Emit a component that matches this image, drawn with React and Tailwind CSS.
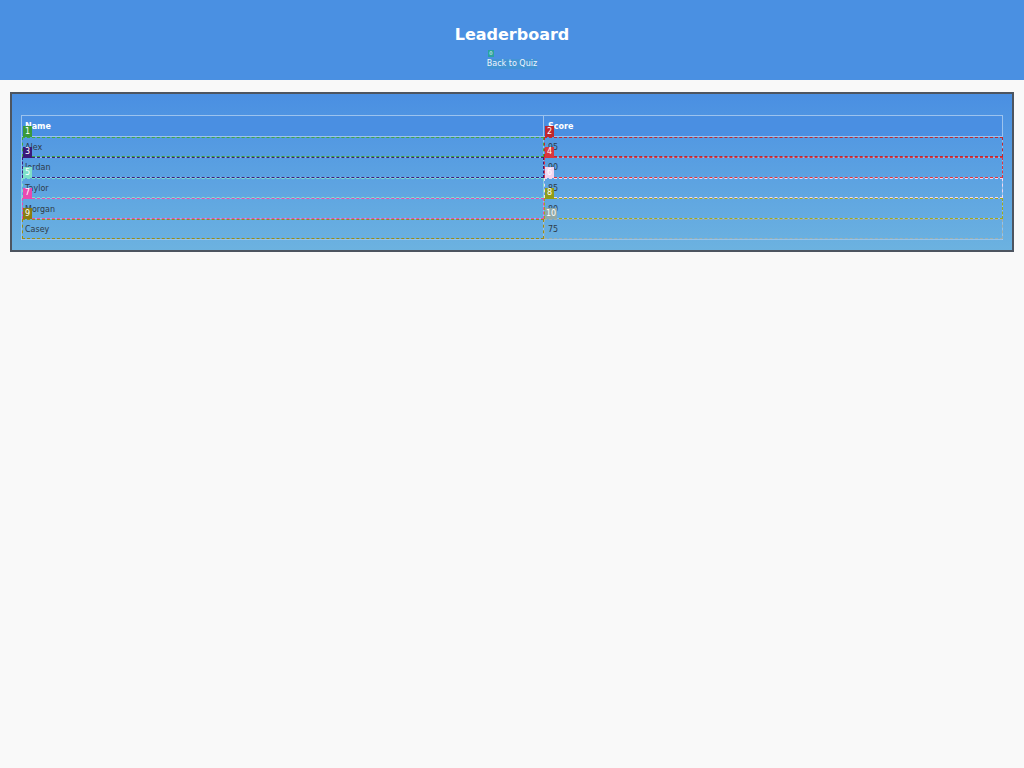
const rows = [
  { name: 'Alex', score: 95 },
  { name: 'Jordan', score: 90 },
  { name: 'Taylor', score: 85 },
  { name: 'Morgan', score: 80 },
  { name: 'Casey', score: 75 },
]

// debug overlay colours per row: [name cell, score cell]
const marks = [
  [{ n: 1, line: 'outline-[#3fa83f]', badge: 'bg-[#3a9a3a] text-white' }, { n: 2, line: 'outline-[#c4262e]', badge: 'bg-[#c0262d] text-white' }],
  [{ n: 3, line: 'outline-[#3b1d7d]', badge: 'bg-[#3b1a7a] text-white' }, { n: 4, line: 'outline-[#dc3540]', badge: 'bg-[#d9363e] text-white' }],
  [{ n: 5, line: 'outline-[#7de3c9]', badge: 'bg-[#7ee0c8] text-white' }, { n: 6, line: 'outline-[#f3d6f0]', badge: 'bg-[#f4d4f0] text-white' }],
  [{ n: 7, line: 'outline-[#e84cb0]', badge: 'bg-[#e84ab0] text-white' }, { n: 8, line: 'outline-[#a0a81e]', badge: 'bg-[#8f9c1a] text-white' }],
  [{ n: 9, line: 'outline-[#9a8c16]', badge: 'bg-[#8a7d10] text-white' }, { n: 10, line: 'outline-[#9fb0b0]', badge: 'bg-[#8fa9a9] text-white' }],
]

function Badge({ n, cls }) {
  return (
    <span className={`absolute left-[1px] top-[-11px] h-[11px] min-w-[9px] px-[1px] flex items-center justify-center text-[8px] leading-none ${cls}`}>
      {n}
    </span>
  )
}

export default function App() {
  return (
    <div className="min-h-screen bg-[#f9f9f9] font-['DejaVu_Sans',sans-serif]">
      <header className="h-[80px] bg-[#4a90e2] flex flex-col items-center pt-[25px]">
        <h1 className="text-[16px] leading-[19px] font-bold text-white">Leaderboard</h1>
        <a href="#" className="relative mt-[15px] text-[8px] leading-[10px] text-[#eef5ff] bg-[#3a9ac0]/40">
          <span className="absolute left-[1px] top-[-9px] h-[7px] w-[6px] bg-[#2aa3a0] text-[5px] leading-[7px] text-white text-center">0</span>
          Back to Quiz
        </a>
      </header>

      <div className="mx-[10px] mt-[12px] border-2 border-[#4d5560] bg-gradient-to-b from-[#4a8fe2] to-[#6cb2e0] pt-[21px] px-[9px] pb-[10px]">
        <table className="w-full border-collapse text-[8px]">
          <thead>
            <tr className="bg-[#4a8fe2]">
              <th className="w-[522px] border border-[#9cc3ee] text-left font-bold text-white px-[3px] pt-[2px] pb-0 h-[21px] leading-[10px]">Name</th>
              <th className="border border-[#9cc3ee] text-left font-bold text-white px-[4px] pt-[2px] pb-0 h-[21px] leading-[10px]">Score</th>
            </tr>
          </thead>
          <tbody>
            {rows.map((r, i) => (
              <tr key={r.name}>
                <td className={`relative border border-[#a9cdef]/70 px-[3px] pt-[2px] pb-0 h-[20.6px] leading-[10px] text-[#2f3b48] outline-1 outline-dashed -outline-offset-1 ${marks[i][0].line}`}>
                  <Badge n={marks[i][0].n} cls={marks[i][0].badge} />
                  {r.name}
                </td>
                <td className={`relative border border-[#a9cdef]/70 px-[4px] pt-[2px] pb-0 h-[20.6px] leading-[10px] text-[#2f3b48] outline-1 outline-dashed -outline-offset-1 ${marks[i][1].line}`}>
                  <Badge n={marks[i][1].n} cls={marks[i][1].badge} />
                  {r.score}
                </td>
              </tr>
            ))}
          </tbody>
        </table>
      </div>
    </div>
  )
}
